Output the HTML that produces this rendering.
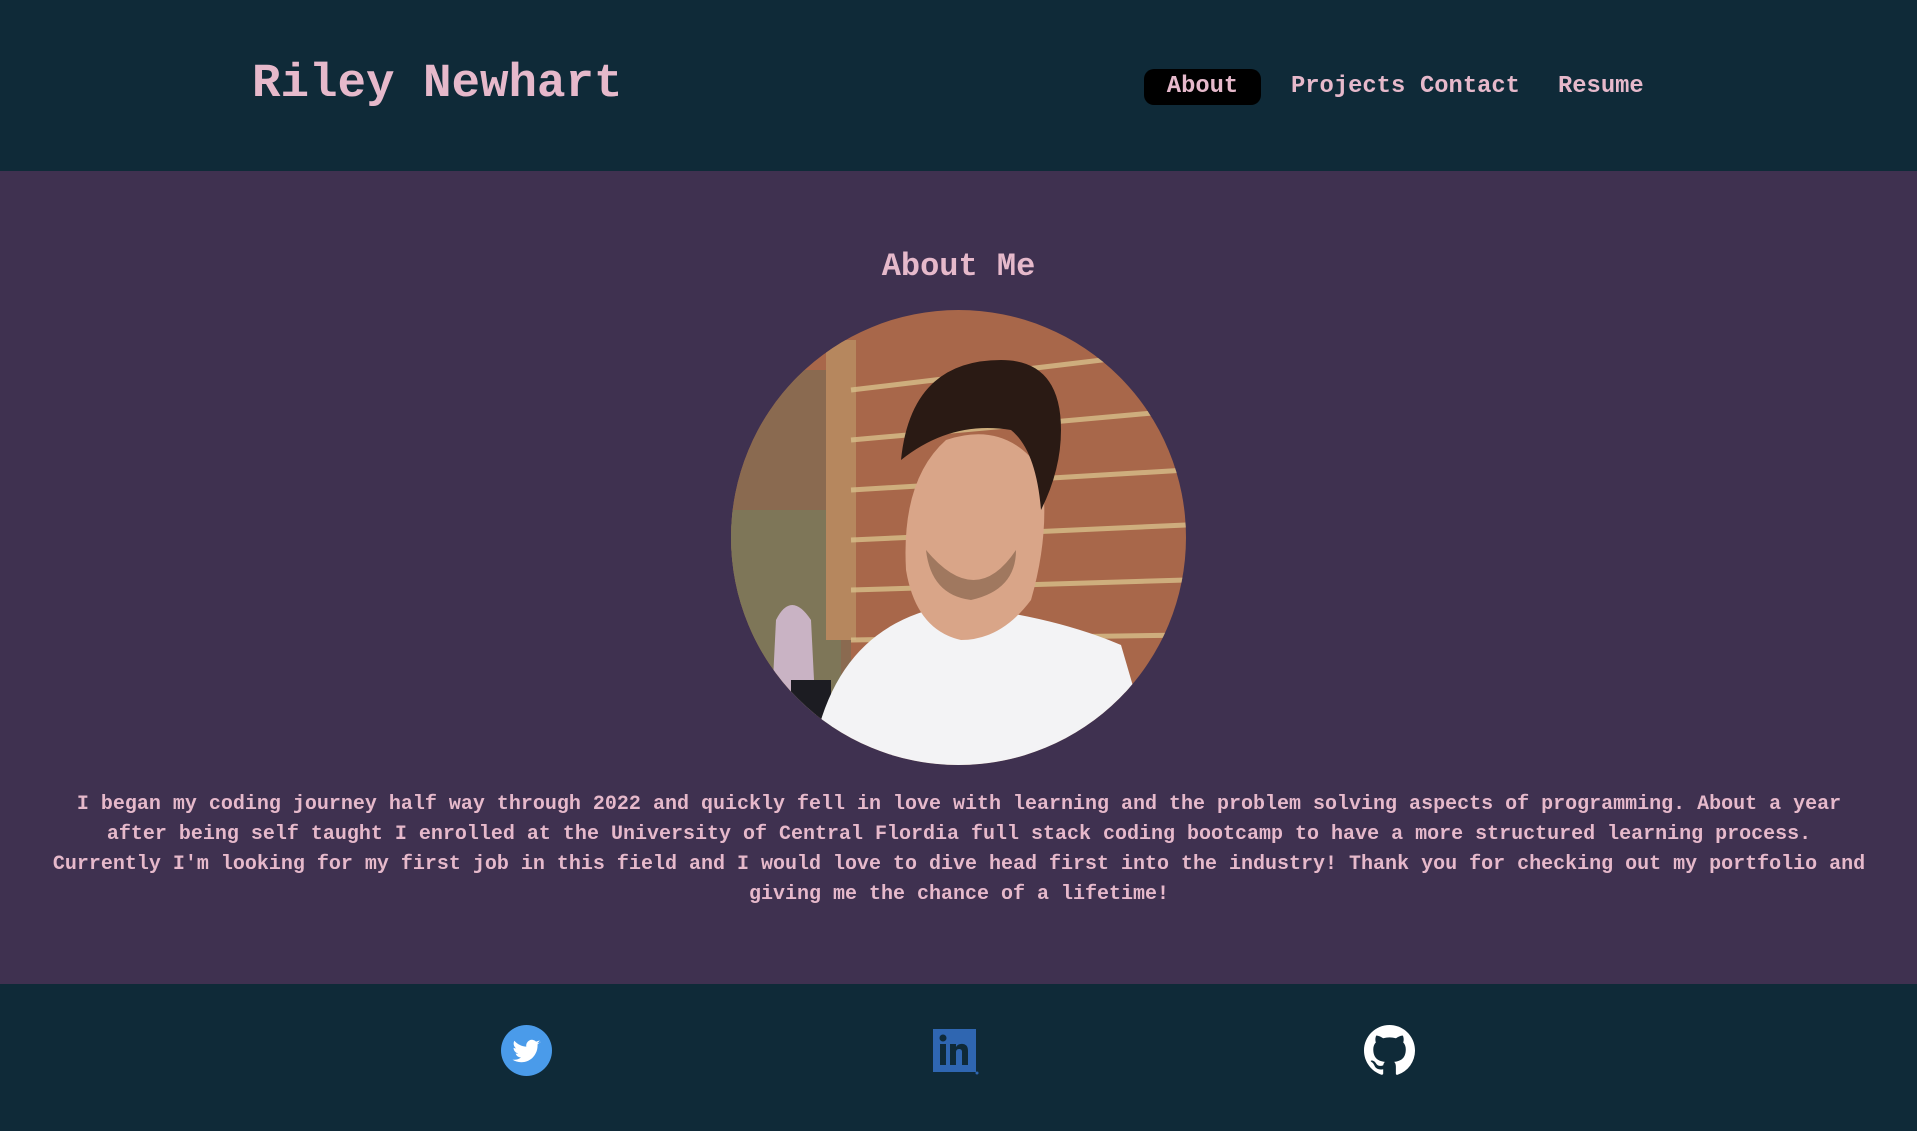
<!DOCTYPE html>
<html><head><meta charset="utf-8"><style>
*{margin:0;padding:0;box-sizing:border-box}
body{width:1917px;height:1131px;overflow:hidden;background:#3f3150;font-family:"Liberation Mono",monospace;font-weight:bold;color:#e6b9cb}
header{position:absolute;left:0;top:0;width:1917px;height:171px;background:#0f2a38}
.name{position:absolute;left:252px;top:56px;font-size:47.5px;line-height:56px}
.nav a{position:absolute;top:69px;height:36px;line-height:36px;font-size:23.8px;color:#e6b9cb;text-decoration:none}
.about{left:1144px;width:117px;background:#000;border-radius:10px;text-align:center}
h2{position:absolute;top:247px;width:1917px;text-align:center;font-size:32px;line-height:40px}
.photo{position:absolute;left:731px;top:310px;width:455px;height:455px;border-radius:50%;overflow:hidden}
p{position:absolute;left:48px;width:1822px;top:790px;text-align:center;font-size:20px;line-height:30px}
footer{position:absolute;left:0;top:984px;width:1917px;height:147px;background:#0f2a38}
</style></head><body>
<header>
<div class="name">Riley Newhart</div>
<div class="nav">
<a class="about">About</a>
<a style="left:1291px">Projects</a>
<a style="left:1420px">Contact</a>
<a style="left:1558px">Resume</a>
</div>
</header>
<h2>About Me</h2>
<div class="photo">
<svg width="455" height="455" viewBox="0 0 455 455">
<rect width="455" height="455" fill="#a8674a"/>
<rect x="0" y="60" width="120" height="395" fill="#8a6a50"/>
<rect x="0" y="200" width="110" height="255" fill="#7e7658"/>
<rect x="95" y="30" width="30" height="300" fill="#b6875e"/>
<g stroke="#d8c08a" stroke-width="5" opacity=".8">
<line x1="120" y1="80" x2="455" y2="40"/><line x1="120" y1="130" x2="455" y2="100"/>
<line x1="120" y1="180" x2="455" y2="160"/><line x1="120" y1="230" x2="455" y2="215"/>
<line x1="120" y1="280" x2="455" y2="270"/><line x1="120" y1="330" x2="455" y2="325"/>
<line x1="120" y1="380" x2="455" y2="380"/>
</g>
<path d="M45 310 q15 -30 35 0 l5 100 h-45z" fill="#c9b3c4"/>
<rect x="60" y="370" width="40" height="85" fill="#1c1c22"/>
<path d="M80 455 q20 -140 140 -160 q100 10 170 40 l35 120z" fill="#f3f3f5"/>
<path d="M175 260 q-5 -90 40 -130 q60 -20 95 30 q10 60 -10 130 q-30 40 -70 40 q-45 -10 -55 -70z" fill="#d9a588"/>
<path d="M170 150 q10 -100 100 -100 q60 0 60 70 q0 40 -20 80 q-5 -60 -30 -80 q-60 -10 -110 30z" fill="#2a1a14"/>
<path d="M195 240 q50 60 90 0 q0 40 -45 50 q-40 -5 -45 -50z" fill="#7a5a44" opacity=".6"/>
</svg>
</div>
<p>I began my coding journey half way through 2022 and quickly fell in love with learning and the problem solving aspects of programming. About a year after being self taught I enrolled at the University of Central Flordia full stack coding bootcamp to have a more structured learning process. Currently I'm looking for my first job in this field and I would love to dive head first into the industry! Thank you for checking out my portfolio and giving me the chance of a lifetime!</p>
<footer>
<svg style="position:absolute;left:501px;top:41px" width="51" height="51" viewBox="0 0 24 24"><circle cx="12" cy="12" r="12" fill="#4a9bea"/><path fill="#fff" d="M18.5 8.2c-.5.2-1 .4-1.5.4.5-.3 1-.8 1.2-1.4-.5.3-1.1.5-1.7.6a2.7 2.7 0 0 0-4.6 2.4c-2.2-.1-4.2-1.2-5.6-2.8-.7 1.2-.3 2.8.8 3.6-.4 0-.8-.1-1.2-.3 0 1.3.9 2.4 2.2 2.7-.4.1-.8.1-1.2 0 .3 1.1 1.3 1.8 2.5 1.9A5.4 5.4 0 0 1 5.4 16.3c1.2.8 2.6 1.2 4.1 1.2 5 0 7.8-4.2 7.7-8v-.4c.5-.4 1-.8 1.3-1.3z"/></svg>
<svg style="position:absolute;left:933px;top:45px" width="46" height="46" viewBox="0 0 46 46"><rect width="43" height="43" fill="#2f66b1"/><rect x="7" y="15" width="6" height="21" fill="#0f2a38"/><circle cx="10" cy="9" r="3.5" fill="#0f2a38"/><path d="M17 15h6v3c1.5-2.5 4-3.5 7-3 4 .5 5 3.5 5 7v14h-6V23c0-2-1-3-3-3s-3 1.5-3 3v13h-6z" fill="#0f2a38"/><circle cx="44" cy="44" r="1.5" fill="#2f66b1"/></svg>
<svg style="position:absolute;left:1364px;top:41px" width="51" height="51" viewBox="0 0 16 16"><path fill="#fff" d="M8 0C3.58 0 0 3.58 0 8c0 3.54 2.29 6.53 5.47 7.59.4.07.55-.17.55-.38v-1.34C3.79 14.36 3.31 12.8 3.310 12.8c-.36-.92-.89-1.17-.89-1.17-.73-.5.06-.49.06-.49.8.06 1.23.83 1.23.83.71 1.22 1.87.87 2.33.66.07-.52.28-.87.51-1.07-1.78-.2-3.64-.89-3.64-3.95 0-.87.31-1.59.82-2.15-.08-.2-.36-1.02.08-2.12 0 0 .67-.21 2.2.82a7.6 7.6 0 0 1 4 0c1.53-1.04 2.2-.82 2.2-.82.44 1.1.16 1.92.08 2.12.51.56.82 1.27.82 2.15 0 3.07-1.87 3.75-3.65 3.95.29.25.54.73.54 1.48v2.2c0 .21.15.46.55.38A8.01 8.01 0 0 0 16 8c0-4.42-3.58-8-8-8z"/></svg>
</footer>
</body></html>
